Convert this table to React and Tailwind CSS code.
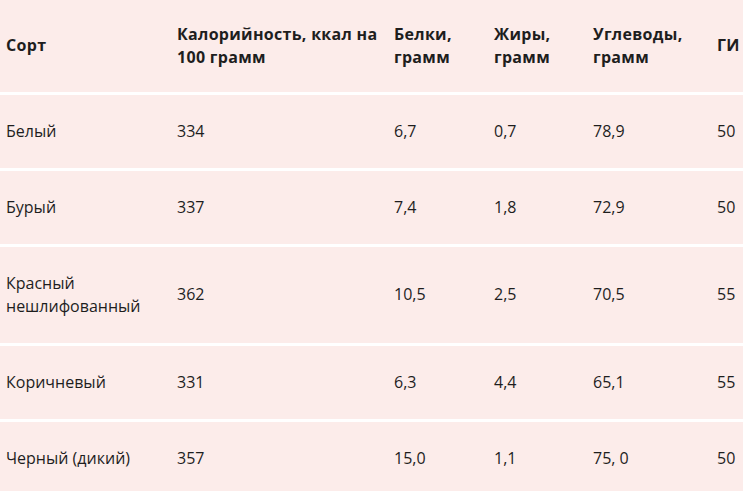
import React from "react";

const rows = [
  ["Белый", "334", "6,7", "0,7", "78,9", "50"],
  ["Бурый", "337", "7,4", "1,8", "72,9", "50"],
  ["Красный нешлифованный", "362", "10,5", "2,5", "70,5", "55"],
  ["Коричневый", "331", "6,3", "4,4", "65,1", "55"],
  ["Черный (дикий)", "357", "15,0", "1,1", "75, 0", "50"],
];

const headers = [
  "Сорт",
  "Калорийность, ккал на 100 грамм",
  "Белки, грамм",
  "Жиры, грамм",
  "Углеводы, грамм",
  "ГИ",
];

const widths = ["w-[171px]", "w-[217px]", "w-[100px]", "w-[99px]", "w-[124px]", "w-[60px]"];

export default function App() {
  return (
    <div
      className="w-[743px] h-[491px] overflow-hidden bg-white text-[#1e1e1e]"
      style={{ fontFamily: "'Open Sans', 'Liberation Sans', sans-serif" }}
    >
      <table className="w-[771px] border-collapse table-fixed text-[16px] leading-[23px]">
        <thead>
          <tr className="bg-[#fcecea] border-b-[3px] border-white">
            {headers.map((h, i) => (
              <th
                key={i}
                className={`${widths[i]} text-left align-middle font-bold tracking-[0.3px] pl-[6px] pr-1 h-[93px]`}
              >
                {h}
              </th>
            ))}
          </tr>
        </thead>
        <tbody>
          {rows.map((r, ri) => (
            <tr key={ri} className="bg-[#fcecea] border-b-[3px] border-white">
              {r.map((c, ci) => (
                <td key={ci} className="text-left align-middle pl-[6px] pr-1 py-[25px]">
                  {c}
                </td>
              ))}
            </tr>
          ))}
        </tbody>
      </table>
    </div>
  );
}
